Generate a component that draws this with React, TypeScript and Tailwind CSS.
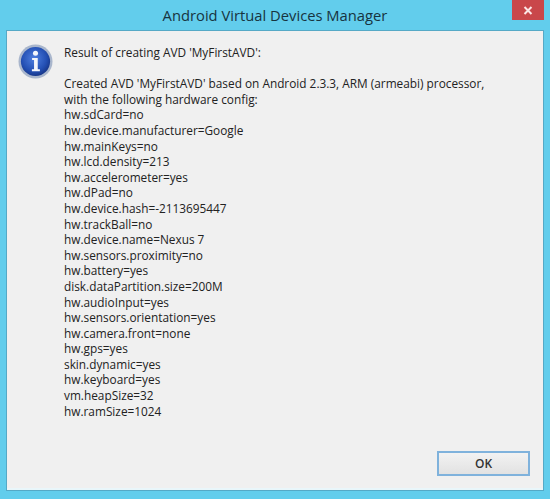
const lines = [
  'hw.sdCard=no',
  'hw.device.manufacturer=Google',
  'hw.mainKeys=no',
  'hw.lcd.density=213',
  'hw.accelerometer=yes',
  'hw.dPad=no',
  'hw.device.hash=-2113695447',
  'hw.trackBall=no',
  'hw.device.name=Nexus 7',
  'hw.sensors.proximity=no',
  'hw.battery=yes',
  'disk.dataPartition.size=200M',
  'hw.audioInput=yes',
  'hw.sensors.orientation=yes',
  'hw.camera.front=none',
  'hw.gps=yes',
  'skin.dynamic=yes',
  'hw.keyboard=yes',
  'vm.heapSize=32',
  'hw.ramSize=1024',
];

function InfoIcon() {
  return (
    <svg width="35" height="35" viewBox="0 0 36 36" className="shrink-0">
      <defs>
        <radialGradient id="infoFill" cx="45%" cy="40%" r="65%">
          <stop offset="0%" stopColor="#4f7fe0" />
          <stop offset="65%" stopColor="#2450b4" />
          <stop offset="100%" stopColor="#14307f" />
        </radialGradient>
      </defs>
      <circle cx="18" cy="18" r="17.5" fill="#a9b6cc" />
      <circle cx="18" cy="18" r="15" fill="url(#infoFill)" />
      <circle cx="18" cy="9.5" r="2.6" fill="#f4f6fb" />
      <path d="M14.5 14.5h5.8v11.5h2.2v2h-8.2v-2h2.2v-9.5h-2z" fill="#f4f6fb" />
    </svg>
  );
}

export default function App() {
  return (
    <div className="w-[550px] h-[499px] bg-[#62cdec] flex flex-col overflow-hidden font-['Open_Sans',sans-serif]">
      <div className="h-[31px] shrink-0 flex items-start relative">
        <div className="flex-1 text-center text-[#17343f] text-[14.75px] leading-[31px]">Android Virtual Devices Manager</div>
        <div className="absolute right-[6px] top-0 w-[32px] h-[20px] bg-[#c9474a] flex items-center justify-center">
          <svg width="10" height="9" viewBox="0 0 10 9">
            <path d="M1.5 1l7 7M8.5 1l-7 7" stroke="#fbe6e6" strokeWidth="2" />
          </svg>
        </div>
      </div>
      <div className="mx-[7px] h-[459px] bg-[#f0f0f0] border-b-2 border-[#e9f6fa] shadow-[0_0_0_1px_#55a9c6] flex flex-col">
        <div className="flex flex-1 pl-[11px] pt-[13px]">
          <InfoIcon />
          <div className="ml-[11px] pt-[1px] text-[11.84px] leading-[15.6px] text-[#222]">
            <p>Result of creating AVD 'MyFirstAVD':</p>
            <p className="mt-[15.6px]">Created AVD 'MyFirstAVD' based on Android 2.3.3, ARM (armeabi) processor,</p>
            <p>with the following hardware config:</p>
            {lines.map((line) => (
              <p key={line}>{line}</p>
            ))}
          </div>
        </div>
        <div className="flex justify-end pr-[13px] pb-[12px]">
          <button className="w-[93px] h-[25px] border-2 border-[#7fb2dc] bg-gradient-to-b from-[#f2f2f2] to-[#e2e2e2] text-[12px] font-semibold text-[#333]">
            OK
          </button>
        </div>
      </div>
    </div>
  );
}
